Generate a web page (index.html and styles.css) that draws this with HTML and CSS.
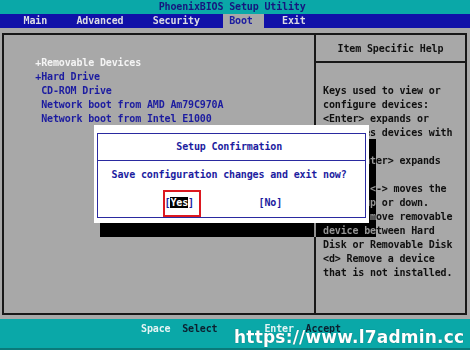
FILE: index.html
```html
<!DOCTYPE html>
<html lang="en">
<head>
<meta charset="utf-8">
<title>PhoenixBIOS Setup Utility</title>
<link rel="stylesheet" href="styles.css">
</head>
<body>
<div class="screen">
  <header class="titlebar">PhoenixBIOS Setup Utility</header>
  <nav class="menubar">
    <span class="menu-item m-main">Main</span>
    <span class="menu-item m-adv">Advanced</span>
    <span class="menu-item m-sec">Security</span>
    <span class="menu-item m-boot">Boot</span>
    <span class="menu-item m-exit">Exit</span>
  </nav>
  <main class="body">
    <div class="frame">
      <section class="list">
        <div class="list-item active">+Removable Devices</div>
        <div class="list-item">+Hard Drive</div>
        <div class="list-item"> CD-ROM Drive</div>
        <div class="list-item"> Network boot from AMD Am79C970A</div>
        <div class="list-item"> Network boot from Intel E1000</div>
      </section>
      <aside class="help">
        <div class="help-title">Item Specific Help</div>
        <div class="help-text">
          <div class="help-line">Keys used to view or</div>
          <div class="help-line">configure devices:</div>
          <div class="help-line">&lt;Enter&gt; expands or</div>
          <div class="help-line">collapses devices with</div>
          <div class="help-line">a + or -</div>
          <div class="help-line">&lt;Ctrl+Enter&gt; expands</div>
          <div class="help-line">all</div>
          <div class="help-line">&lt;+&gt; and &lt;-&gt; moves the</div>
          <div class="help-line">device up or down.</div>
          <div class="help-line">&lt;n&gt; May move removable</div>
          <div class="help-line">device between Hard</div>
          <div class="help-line">Disk or Removable Disk</div>
          <div class="help-line">&lt;d&gt; Remove a device</div>
          <div class="help-line">that is not installed.</div>
        </div>
      </aside>
    </div>
  </main>
  <footer class="footer"><span class="key">Space</span>  <span class="act">Select</span>        <span class="key">Enter</span>  <span class="act">Accept</span></footer>

  <div class="shadow"></div>
  <div class="dialog">
    <div class="dialog-inner">
      <div class="dlg-title">Setup Confirmation</div>
      <div class="dlg-msg">Save configuration changes and exit now?</div>
      <div class="dlg-buttons">
        <span class="btn btn-yes">[<span class="sel">Yes</span>]</span>
        <span class="btn btn-no">[No]</span>
      </div>
    </div>
  </div>
  <div class="watermark">https://www.l7admin.cc</div>
</div>
</body>
</html>
```
FILE: styles.css
```css
:root {
  --c: 5.875px;
  --gray: #a8a8a8;
  --teal: #0aa8a8;
  --line: #181818;
  --blue: #1c1ca0;
}

* {
  box-sizing: border-box;
  margin: 0;
  padding: 0;
}

html, body {
  width: 470px;
  height: 350px;
  overflow: hidden;
}

body {
  margin: 0;
  font-family: "DejaVu Sans Mono", "Liberation Mono", monospace;
  font-weight: bold;
  font-size: 10px;
  letter-spacing: -0.145px;
  line-height: 14px;
  background: var(--gray);
}

.screen {
  position: relative;
  width: 470px;
  height: 350px;
  background: var(--gray);
  display: flex;
  flex-direction: column;
}

.titlebar {
  height: 14px;
  flex: none;
  background: var(--teal);
  color: #16167e;
  padding-left: calc(27 * var(--c));
  white-space: pre;
}

.menubar {
  height: 14px;
  flex: none;
  background: #1010a8;
  color: #dcdce4;
  display: flex;
  padding-left: calc(4 * var(--c));
}

.menu-item { white-space: pre; }
.m-adv { margin-left: calc(5 * var(--c)); }
.m-sec { margin-left: calc(5 * var(--c)); }
.m-boot {
  margin-left: calc(4 * var(--c));
  padding: 0 calc(2 * var(--c)) 0 var(--c);
  background: var(--gray);
  color: #1c1ca0;
}
.m-exit { margin-left: calc(3 * var(--c)); }

.body {
  height: 291px;
  flex: none;
  padding: 5px 3px 4px 2px;
}

.frame {
  height: 282px;
  border: 2px solid var(--line);
  display: grid;
  grid-template-columns: 310px 1fr;
  overflow: hidden;
}

.list {
  padding: 21px 0 0 31.25px;
  color: var(--blue);
}

.list-item {
  white-space: pre;
  height: 14px;
}

.list-item.active {
  color: #f4f4f4;
}

.help {
  border-left: 2px solid var(--line);
  color: #101010;
}

.help-title {
  padding: 7px 0 5px;
  text-align: center;
  border-bottom: 2px solid var(--line);
  white-space: pre;
}

.help-text {
  padding: 21px 0 0 7px;
}

.help-line {
  white-space: pre;
  height: 14px;
}

.footer {
  height: 31px;
  flex: none;
  background: var(--teal);
  padding: 3px 0 0 calc(24 * var(--c));
  white-space: pre;
  border-bottom: 2px solid #0a7a7a;
}

.footer .key { color: #e4f4f4; }
.footer .act { color: #0c2030; }

/* dialog overlay */
.shadow {
  position: absolute;
  left: 100px;
  top: 139px;
  width: 276px;
  height: 98px;
  background: var(--gray);
  mix-blend-mode: difference;
}

.dialog {
  position: absolute;
  left: 94px;
  top: 125px;
  width: 275px;
  height: 98px;
  background: #ffffff;
  padding: 8px 3px 5px 3px;
  color: var(--blue);
}

.dialog-inner {
  height: 100%;
  border: 1px solid #2a2aa0;
}

.dlg-title {
  padding: 6px 0 6px 78.25px;
  border-bottom: 1px solid #2a2aa0;
  white-space: pre;
}

.dlg-msg {
  padding: 7px 0 0 13.6px;
  white-space: pre;
}

.dlg-buttons {
  margin-top: 14px;
  padding-left: 66.5px;
  display: flex;
  height: 14px;
}

.btn {
  white-space: pre;
}

.btn-yes {
  position: relative;
}

.btn-yes::after {
  content: "";
  position: absolute;
  left: -1.5px;
  top: -6px;
  width: 34px;
  height: 23px;
  border: 2px solid #dc1820;
}

.sel {
  background: #000000;
  color: #ffffff;
}

.btn-no {
  margin-left: calc(11 * var(--c));
}

.watermark {
  position: absolute;
  left: 234px;
  top: 327px;
  font-family: "DejaVu Sans", "Liberation Sans", sans-serif;
  font-weight: bold;
  font-size: 17px;
  line-height: 20px;
  letter-spacing: 0.2px;
  color: #ffffff;
  text-shadow: 0 0 1px rgba(0, 0, 0, 0.45);
  white-space: nowrap;
}
```
